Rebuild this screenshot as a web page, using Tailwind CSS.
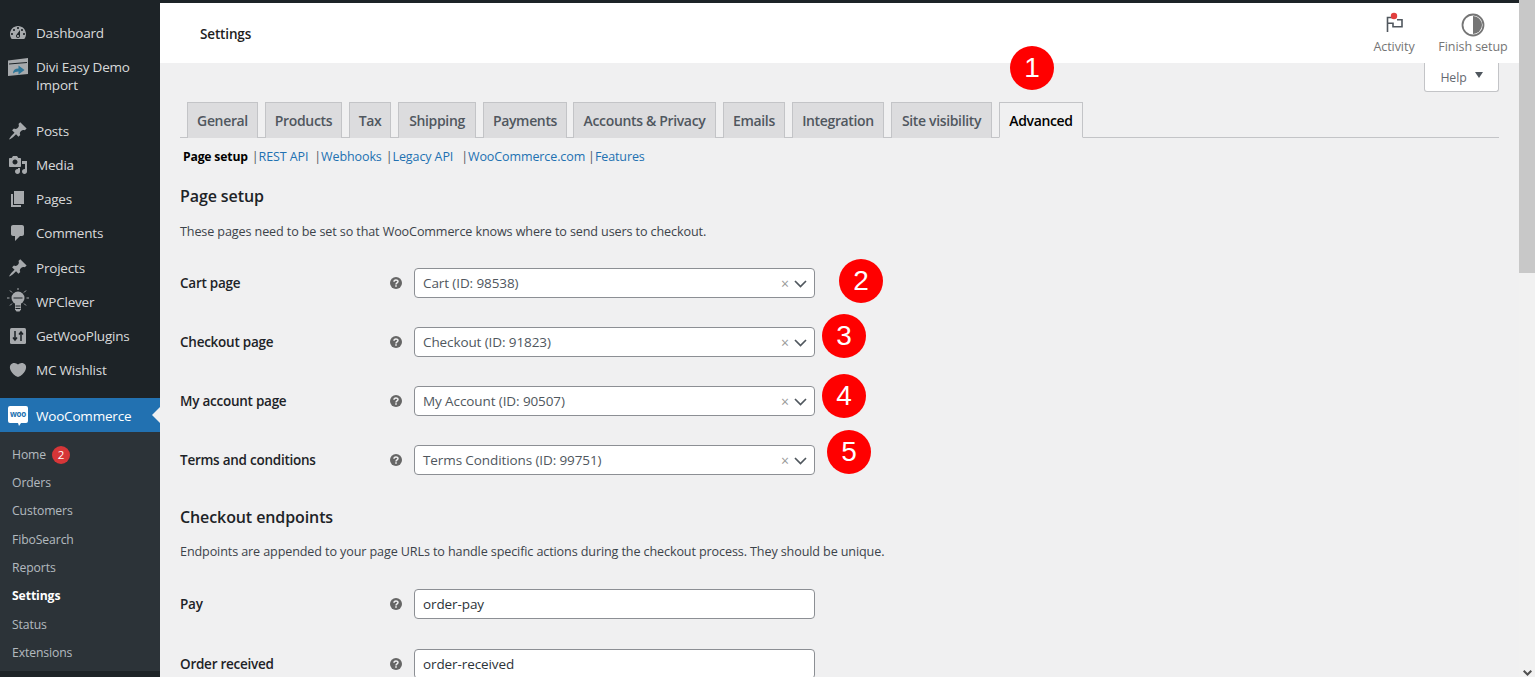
<!DOCTYPE html>
<html lang="en">
<head>
<meta charset="utf-8">
<title>Settings</title>
<script src="https://cdn.jsdelivr.net/npm/@tailwindcss/browser@4"></script>
</head>
<body class="bg-[#f0f0f1] font-['Open_Sans',sans-serif] overflow-hidden">
<div class="relative flex h-[677px] w-[1535px] overflow-hidden">

  <!-- Sidebar -->
  <aside class="w-[160px] shrink-0 bg-[#1d2327] text-[13.5px] tracking-[-0.2px] text-[#f0f0f1]/90">
    <div class="h-[16px]"></div>
    <a class="flex h-[34px] items-center"><svg class="ml-[8px] mr-[8px] h-[20px] w-[20px] fill-[#a7aaad]" viewBox="0 0 20 20"><path d="M3.76 16h12.48c1.1-1.37 1.76-3.11 1.76-5 0-4.42-3.58-8-8-8s-8 3.58-8 8c0 1.89.66 3.63 1.76 5zM10 4c.55 0 1 .45 1 1s-.45 1-1 1-1-.45-1-1 .45-1 1-1zM6 6c.55 0 1 .45 1 1s-.45 1-1 1-1-.45-1-1 .45-1 1-1zm8 0c.55 0 1 .45 1 1s-.45 1-1 1-1-.45-1-1 .45-1 1-1zm-5.37 5.55L12 7v6c0 1.1-.9 2-2 2s-2-.9-2-2c0-.57.24-1.08.63-1.45zM4 10c.55 0 1 .45 1 1s-.45 1-1 1-1-.45-1-1 .45-1 1-1zm12 0c.55 0 1 .45 1 1s-.45 1-1 1-1-.45-1-1 .45-1 1-1zm-5 3c0-.55-.45-1-1-1s-1 .45-1 1 .45 1 1 1 1-.45 1-1z"/></svg>Dashboard</a>
    <a class="flex h-[48px] items-start pt-[9px] leading-[17.500px]"><svg class="ml-[8px] mr-[8px] mt-[-1px] h-[20px] w-[20px] shrink-0" viewBox="0 0 20 20"><path fill="#a7aaad" d="M0 2.500 20 0v16L0 18z"/><path fill="#1d2327" d="M1 5.500l18-1.500v1L1 6.500z"/><path fill="#2e7698" d="M5 15.500q0-5 5.500-5V7.500l6 4.500-6 4.500v-3q-3.500 0-5.500 2z"/></svg><span>Divi Easy Demo<br>Import</span></a>
    <div class="h-[16px]"></div>
    <a class="flex h-[34.150px] items-center"><svg class="ml-[8px] mr-[8px] h-[20px] w-[20px] fill-[#a7aaad]" viewBox="0 0 20 20"><path d="M10.44 3.02l1.82-1.82 6.36 6.35-1.83 1.82c-1.05-.68-2.48-.57-3.41.36l-.75.75c-.92.93-1.04 2.35-.35 3.41l-1.83 1.82-2.41-2.41-2.8 2.79c-.42.42-3.38 2.71-3.8 2.29s1.86-3.39 2.28-3.81l2.79-2.79L4.1 9.36l1.83-1.82c1.05.69 2.48.57 3.4-.36l.75-.75c.93-.92 1.05-2.35.36-3.41z"/></svg>Posts</a>
    <a class="flex h-[34.150px] items-center"><svg class="ml-[8px] mr-[8px] h-[20px] w-[20px] fill-[#a7aaad]" viewBox="0 0 20 20"><path d="M13 11V4c0-.55-.45-1-1-1h-1.670L9 1H5L3.670 3H2c-.55 0-1 .45-1 1v7c0 .55.45 1 1 1h10c.55 0 1-.45 1-1zM7 4.500c1.380 0 2.500 1.120 2.500 2.500S8.380 9.500 7 9.500 4.500 8.380 4.500 7 5.620 4.500 7 4.500zM14 6h5v10.500c0 1.380-1.120 2.500-2.500 2.500S14 17.880 14 16.500s1.120-2.500 2.500-2.500c.17 0 .34.02.5.05V9h-3V6zm-4 8.050V13h2v3.500c0 1.380-1.120 2.500-2.500 2.500S7 17.880 7 16.500 8.120 14 9.500 14c.17 0 .34.02.5.05z"/></svg>Media</a>
    <a class="flex h-[34.150px] items-center"><svg class="ml-[8px] mr-[8px] h-[20px] w-[20px] fill-[#a7aaad]" viewBox="0 0 20 20"><path d="M6 15V2h10v13H6zm-1 1h8v2H3V5h2v11z"/></svg>Pages</a>
    <a class="flex h-[34.150px] items-center"><svg class="ml-[8px] mr-[8px] h-[20px] w-[20px] fill-[#a7aaad]" viewBox="0 0 20 20"><path d="M5 2h9c1.100 0 2 .9 2 2v7c0 1.100-.9 2-2 2h-2l-5 5v-5H5c-1.100 0-2-.9-2-2V4c0-1.100.9-2 2-2z"/></svg>Comments</a>
    <a class="flex h-[34.150px] items-center"><svg class="ml-[8px] mr-[8px] h-[20px] w-[20px] fill-[#a7aaad]" viewBox="0 0 20 20"><path d="M10.44 3.02l1.82-1.82 6.36 6.35-1.83 1.82c-1.05-.68-2.48-.57-3.41.36l-.75.75c-.92.93-1.04 2.35-.35 3.41l-1.83 1.82-2.41-2.41-2.8 2.79c-.42.42-3.38 2.71-3.8 2.29s1.86-3.39 2.28-3.81l2.79-2.79L4.1 9.36l1.83-1.82c1.05.69 2.48.57 3.4-.36l.75-.75c.93-.92 1.05-2.35.36-3.41z"/></svg>Projects</a>
    <a class="flex h-[34.150px] items-center"><svg class="mb-[2px] ml-[7px] mr-[7px] h-[25px] w-[22px]" viewBox="0 0 22 25"><circle cx="11" cy="10" r="6.500" fill="#a7aaad"/><path fill="#a7aaad" d="M8 15h6v6.500l-1.500 2h-3l-1.500-2z"/><path stroke="#a7aaad" stroke-width="1" d="M11 0v2M0 10h2.500M19.500 10H22M3 2.500l2 2M19 2.500l-2 2M3 17.500l2-2M19 17.500l-2-2"/><path stroke="#1d2327" stroke-width="1" d="M6.500 10h9M8.500 18h5M8.500 20.500h5"/></svg>WPClever</a>
    <a class="flex h-[34.150px] items-center"><svg class="ml-[8px] mr-[8px] h-[20px] w-[20px]" viewBox="0 0 20 20"><rect x="2" y="2" width="16" height="16" rx="1.500" fill="#a7aaad"/><path stroke="#1d2327" stroke-width="1.500" fill="none" d="M7 5v9M5 11.500l2 2.500 2-2.500M13 15V6M11 8.500L13 6l2 2.500"/></svg>GetWooPlugins</a>
    <a class="flex h-[34.150px] items-center"><svg class="ml-[8px] mr-[8px] h-[20px] w-[20px] fill-[#a7aaad]" viewBox="0 0 20 20"><path d="M10 17.120c3.330-1.400 5.740-3.790 7.040-6.210 1.280-2.410 1.460-4.810.32-6.250-1.030-1.290-2.370-1.780-3.730-1.740s-2.680.63-3.630 1.460c-.95-.83-2.270-1.420-3.630-1.460s-2.700.45-3.730 1.740c-1.140 1.440-.96 3.840.34 6.250 1.280 2.420 3.690 4.810 7.020 6.210z"/></svg>MC Wishlist</a>

    <div class="h-[11px]"></div>
    <a class="relative flex h-[34px] items-center bg-[#2271b1] pt-[1px] text-white"><svg class="ml-[8px] mr-[8px] h-[20px] w-[20px]" viewBox="0 0 20 20"><path fill="#fff" d="M2 0h16a2 2 0 0 1 2 2v13a2 2 0 0 1-2 2h-5l-2 3-1-3H2a2 2 0 0 1-2-2V2a2 2 0 0 1 2-2z"/><text x="10" y="11" text-anchor="middle" font-size="8" font-weight="700" fill="#2271b1" font-family="Open Sans">woo</text></svg>WooCommerce<span class="absolute right-0 top-[9px] h-0 w-0 border-y-[8px] border-r-[8px] border-y-transparent border-r-[#f0f0f1]"></span></a>

    <div class="bg-[#2c3338] pt-[8.700px] pb-[4px] pl-[12px] text-[12.200px] tracking-[-0.1px] text-[#f0f6fc]/70">
      <a class="flex h-[28.340px] items-center">Home<span class="ml-[6px] flex h-[18px] w-[18px] items-center justify-center rounded-full bg-[#d63638] text-[11.500px] text-white">2</span></a>
      <a class="flex h-[28.340px] items-center">Orders</a>
      <a class="flex h-[28.340px] items-center">Customers</a>
      <a class="flex h-[28.340px] items-center">FiboSearch</a>
      <a class="flex h-[28.340px] items-center">Reports</a>
      <a class="flex h-[28.340px] items-center font-bold text-white">Settings</a>
      <a class="flex h-[28.340px] items-center">Status</a>
      <a class="flex h-[28.340px] items-center">Extensions</a>
    </div>
  </aside>

  <!-- Main column -->
  <main class="min-w-0 flex-1 text-[#3c434a]">
    <div class="h-[3px] bg-[#1d2327]"></div>
    <header class="flex h-[60px] items-start justify-between bg-white">
      <h1 class="ml-[40px] mt-[21px] text-[13.500px] leading-[20px] font-semibold tracking-[-0.15px] text-[#1e1e1e]">Settings</h1>
      <div class="flex pr-[7px] text-[12.500px] leading-[16px] tracking-[-0.05px] text-[#757575]">
        <div class="flex w-[80px] flex-col items-center">
          <svg class="mt-[9px] h-[22px] w-[22px]" viewBox="0 0 22 22"><path fill="none" stroke="#50575e" stroke-width="1.600" d="M4.500 20V5.500H10M4.500 11.300H10V14.800H19V7.800H14"/><circle cx="11" cy="4" r="3.200" fill="#e2403f"/></svg>
          <span class="mt-[5px]">Activity</span>
        </div>
        <div class="flex w-[78px] flex-col items-center">
          <svg class="mt-[10px] h-[24px] w-[24px]" viewBox="0 0 24 24"><circle cx="12" cy="12" r="10.500" fill="none" stroke="#757575" stroke-width="1.800"/><path fill="#757575" d="M12 3a9 9 0 0 1 0 18z"/></svg>
          <span class="mt-[2px] whitespace-nowrap">Finish setup</span>
        </div>
      </div>
    </header>

    <div class="pl-[20px] pr-[20px]">
      <div class="flex justify-end">
        <button class="flex h-[29px] w-[75px] items-center justify-center gap-[8px] rounded-b-[3px] border border-t-0 border-[#c3c4c7] bg-white pt-[3px] text-[12.300px] tracking-[-0.1px] text-[#646970]">Help <span class="mb-[7px] h-0 w-0 border-x-[4px] border-t-[6px] border-x-transparent border-t-[#50575e]"></span></button>
      </div>

      <nav class="mt-[10px] flex h-[36px] gap-[7px] border-b border-[#c3c4c7] pl-[7px] text-[14px] font-semibold tracking-[-0.35px] text-[#50575e]">
        <a class="flex h-[36px] w-[71px] items-center justify-center border border-b-0 border-[#c3c4c7] bg-[#dcdcde]">General</a>
        <a class="flex h-[36px] w-[77px] items-center justify-center border border-b-0 border-[#c3c4c7] bg-[#dcdcde]">Products</a>
        <a class="flex h-[36px] w-[42px] items-center justify-center border border-b-0 border-[#c3c4c7] bg-[#dcdcde]">Tax</a>
        <a class="flex h-[36px] w-[78px] items-center justify-center border border-b-0 border-[#c3c4c7] bg-[#dcdcde]">Shipping</a>
        <a class="flex h-[36px] w-[84px] items-center justify-center border border-b-0 border-[#c3c4c7] bg-[#dcdcde]">Payments</a>
        <a class="-ml-[1px] flex h-[36px] w-[143px] items-center justify-center border border-b-0 border-[#c3c4c7] bg-[#dcdcde]">Accounts &amp; Privacy</a>
        <a class="flex h-[36px] w-[62px] items-center justify-center border border-b-0 border-[#c3c4c7] bg-[#dcdcde]">Emails</a>
        <a class="flex h-[36px] w-[92px] items-center justify-center border border-b-0 border-[#c3c4c7] bg-[#dcdcde]">Integration</a>
        <a class="flex h-[36px] w-[101px] items-center justify-center border border-b-0 border-[#c3c4c7] bg-[#dcdcde]">Site visibility</a>
        <a class="flex h-[36px] w-[84px] items-center justify-center border border-[#c3c4c7] border-b-[#f0f0f1] bg-[#f0f0f1] text-black">Advanced</a>
      </nav>

      <div class="flex h-[38px] items-center pl-[3px] text-[12.500px] tracking-[-0.1px] text-[#2271b1]">
        <b class="text-[12.200px] tracking-[-0.18px] font-bold text-black">Page setup</b>
        <span class="ml-[4px] text-[#50575e]">|</span><a>REST API</a>
        <span class="ml-[6px] text-[#50575e]">|</span><a>Webhooks</a>
        <span class="ml-[4px] text-[#50575e]">|</span><a>Legacy API</a>
        <span class="ml-[8px] text-[#50575e]">|</span><a>WooCommerce.com</a>
        <span class="ml-[3px] text-[#50575e]">|</span><a>Features</a>
      </div>

      <h2 class="flex h-[40px] items-center text-[16px] font-semibold tracking-[-0.1px] text-[#1d2327]">Page setup</h2>
      <p class="flex h-[30px] items-center pt-[2px] text-[12.600px] tracking-[-0.12px] text-[#3c434a]">These pages need to be set so that WooCommerce knows where to send users to checkout.</p>

      <div class="mt-[22px] flex flex-col gap-[29px]">
        <div class="flex h-[30px] items-center">
          <label class="w-[210px] pt-[1px] text-[13.500px] font-semibold tracking-[-0.25px] text-[#1d2327]">Cart page</label>
          <svg class="h-[12px] w-[12px]" viewBox="0 0 12 12"><circle cx="6" cy="6" r="6" fill="#666"/><path fill="none" stroke="#f0f0f1" stroke-width="1.500" d="M4 4.700C4 2.500 8 2.500 8 4.500 8 6 6 5.700 6 7.500"/><path fill="#f0f0f1" d="M5.200 8.300h1.600v1.500H5.200z"/></svg>
          <div class="ml-[12px] flex h-[30px] w-[401px] items-center rounded-[4px] border border-[#8c8f94] bg-white pl-[8px] pr-[7px] pt-[1px] text-[13.500px] tracking-[-0.1px] text-[#50575e]"><span class="flex-1">Cart (ID: 98538)</span><span class="mr-[5px] text-[14px] text-[#999]">×</span><svg class="h-[8px] w-[13px]" viewBox="0 0 13 8"><path fill="none" stroke="#50575e" stroke-width="1.700" d="M1 1l5.500 5.500L12 1"/></svg></div>
        </div>
        <div class="flex h-[30px] items-center">
          <label class="w-[210px] pt-[1px] text-[13.500px] font-semibold tracking-[-0.25px] text-[#1d2327]">Checkout page</label>
          <svg class="h-[12px] w-[12px]" viewBox="0 0 12 12"><circle cx="6" cy="6" r="6" fill="#666"/><path fill="none" stroke="#f0f0f1" stroke-width="1.500" d="M4 4.700C4 2.500 8 2.500 8 4.500 8 6 6 5.700 6 7.500"/><path fill="#f0f0f1" d="M5.200 8.300h1.600v1.500H5.200z"/></svg>
          <div class="ml-[12px] flex h-[30px] w-[401px] items-center rounded-[4px] border border-[#8c8f94] bg-white pl-[8px] pr-[7px] pt-[1px] text-[13.500px] tracking-[-0.1px] text-[#50575e]"><span class="flex-1">Checkout (ID: 91823)</span><span class="mr-[5px] text-[14px] text-[#999]">×</span><svg class="h-[8px] w-[13px]" viewBox="0 0 13 8"><path fill="none" stroke="#50575e" stroke-width="1.700" d="M1 1l5.500 5.500L12 1"/></svg></div>
        </div>
        <div class="flex h-[30px] items-center">
          <label class="w-[210px] pt-[1px] text-[13.500px] font-semibold tracking-[-0.25px] text-[#1d2327]">My account page</label>
          <svg class="h-[12px] w-[12px]" viewBox="0 0 12 12"><circle cx="6" cy="6" r="6" fill="#666"/><path fill="none" stroke="#f0f0f1" stroke-width="1.500" d="M4 4.700C4 2.500 8 2.500 8 4.500 8 6 6 5.700 6 7.500"/><path fill="#f0f0f1" d="M5.200 8.300h1.600v1.500H5.200z"/></svg>
          <div class="ml-[12px] flex h-[30px] w-[401px] items-center rounded-[4px] border border-[#8c8f94] bg-white pl-[8px] pr-[7px] pt-[1px] text-[13.500px] tracking-[-0.1px] text-[#50575e]"><span class="flex-1">My Account (ID: 90507)</span><span class="mr-[5px] text-[14px] text-[#999]">×</span><svg class="h-[8px] w-[13px]" viewBox="0 0 13 8"><path fill="none" stroke="#50575e" stroke-width="1.700" d="M1 1l5.500 5.500L12 1"/></svg></div>
        </div>
        <div class="flex h-[30px] items-center">
          <label class="w-[210px] pt-[1px] text-[13.500px] font-semibold tracking-[-0.25px] text-[#1d2327]">Terms and conditions</label>
          <svg class="h-[12px] w-[12px]" viewBox="0 0 12 12"><circle cx="6" cy="6" r="6" fill="#666"/><path fill="none" stroke="#f0f0f1" stroke-width="1.500" d="M4 4.700C4 2.500 8 2.500 8 4.500 8 6 6 5.700 6 7.500"/><path fill="#f0f0f1" d="M5.200 8.300h1.600v1.500H5.200z"/></svg>
          <div class="ml-[12px] flex h-[30px] w-[401px] items-center rounded-[4px] border border-[#8c8f94] bg-white pl-[8px] pr-[7px] pt-[1px] text-[13.500px] tracking-[-0.1px] text-[#50575e]"><span class="flex-1">Terms Conditions (ID: 99751)</span><span class="mr-[5px] text-[14px] text-[#999]">×</span><svg class="h-[8px] w-[13px]" viewBox="0 0 13 8"><path fill="none" stroke="#50575e" stroke-width="1.700" d="M1 1l5.500 5.500L12 1"/></svg></div>
        </div>
      </div>

      <h2 class="mt-[23px] flex h-[38px] items-center text-[16px] font-semibold tracking-[-0.1px] text-[#1d2327]">Checkout endpoints</h2>
      <p class="flex h-[30px] items-center pt-[2px] text-[12.600px] tracking-[-0.12px] text-[#3c434a]">Endpoints are appended to your page URLs to handle specific actions during the checkout process. They should be unique.</p>

      <div class="mt-[23px] flex h-[30px] items-center">
        <label class="w-[210px] pt-[1px] text-[13.500px] font-semibold tracking-[-0.25px] text-[#1d2327]">Pay</label>
        <svg class="h-[12px] w-[12px]" viewBox="0 0 12 12"><circle cx="6" cy="6" r="6" fill="#666"/><path fill="none" stroke="#f0f0f1" stroke-width="1.500" d="M4 4.700C4 2.500 8 2.500 8 4.500 8 6 6 5.700 6 7.500"/><path fill="#f0f0f1" d="M5.200 8.300h1.600v1.500H5.200z"/></svg>
        <div class="ml-[12px] flex h-[30px] w-[401px] items-center rounded-[4px] border border-[#8c8f94] bg-white pl-[8px] pt-[1px] text-[13.500px] tracking-[-0.1px] text-[#2c3338]">order-pay</div>
      </div>
      <div class="mt-[30px] flex h-[30px] items-center">
        <label class="w-[210px] pt-[1px] text-[13.500px] font-semibold tracking-[-0.25px] text-[#1d2327]">Order received</label>
        <svg class="h-[12px] w-[12px]" viewBox="0 0 12 12"><circle cx="6" cy="6" r="6" fill="#666"/><path fill="none" stroke="#f0f0f1" stroke-width="1.500" d="M4 4.700C4 2.500 8 2.500 8 4.500 8 6 6 5.700 6 7.500"/><path fill="#f0f0f1" d="M5.200 8.300h1.600v1.500H5.200z"/></svg>
        <div class="ml-[12px] flex h-[30px] w-[401px] items-center rounded-[4px] border border-[#8c8f94] bg-white pl-[8px] pt-[1px] text-[13.500px] tracking-[-0.1px] text-[#2c3338]">order-received</div>
      </div>
    </div>
  </main>

  <!-- Window scrollbar -->
  <div class="flex w-[16px] shrink-0 flex-col bg-[#f1f1f1]">
    <div class="h-[273px] bg-[#c8c8c8]"></div>
    <div class="flex-1"></div>
    <svg class="mx-auto mb-[1px] h-[6px] w-[9px]" viewBox="0 0 9 6"><path fill="none" stroke="#505050" stroke-width="2" d="M.7.7l3.800 3.800L8.300.7"/></svg>
  </div>

  <!-- Numbered annotations over the screenshot -->
  <span class="absolute left-[1010px] top-[46px] flex h-[44px] w-[44px] items-center justify-center rounded-full bg-[#ff0000] font-['Liberation_Sans',sans-serif] text-[28px] text-white">1</span>
  <span class="absolute left-[839px] top-[259px] flex h-[44px] w-[44px] items-center justify-center rounded-full bg-[#ff0000] font-['Liberation_Sans',sans-serif] text-[28px] text-white">2</span>
  <span class="absolute left-[822px] top-[314px] flex h-[44px] w-[44px] items-center justify-center rounded-full bg-[#ff0000] font-['Liberation_Sans',sans-serif] text-[28px] text-white">3</span>
  <span class="absolute left-[822px] top-[374px] flex h-[44px] w-[44px] items-center justify-center rounded-full bg-[#ff0000] font-['Liberation_Sans',sans-serif] text-[28px] text-white">4</span>
  <span class="absolute left-[827px] top-[430px] flex h-[44px] w-[44px] items-center justify-center rounded-full bg-[#ff0000] font-['Liberation_Sans',sans-serif] text-[28px] text-white">5</span>
</div>
</body>
</html>
